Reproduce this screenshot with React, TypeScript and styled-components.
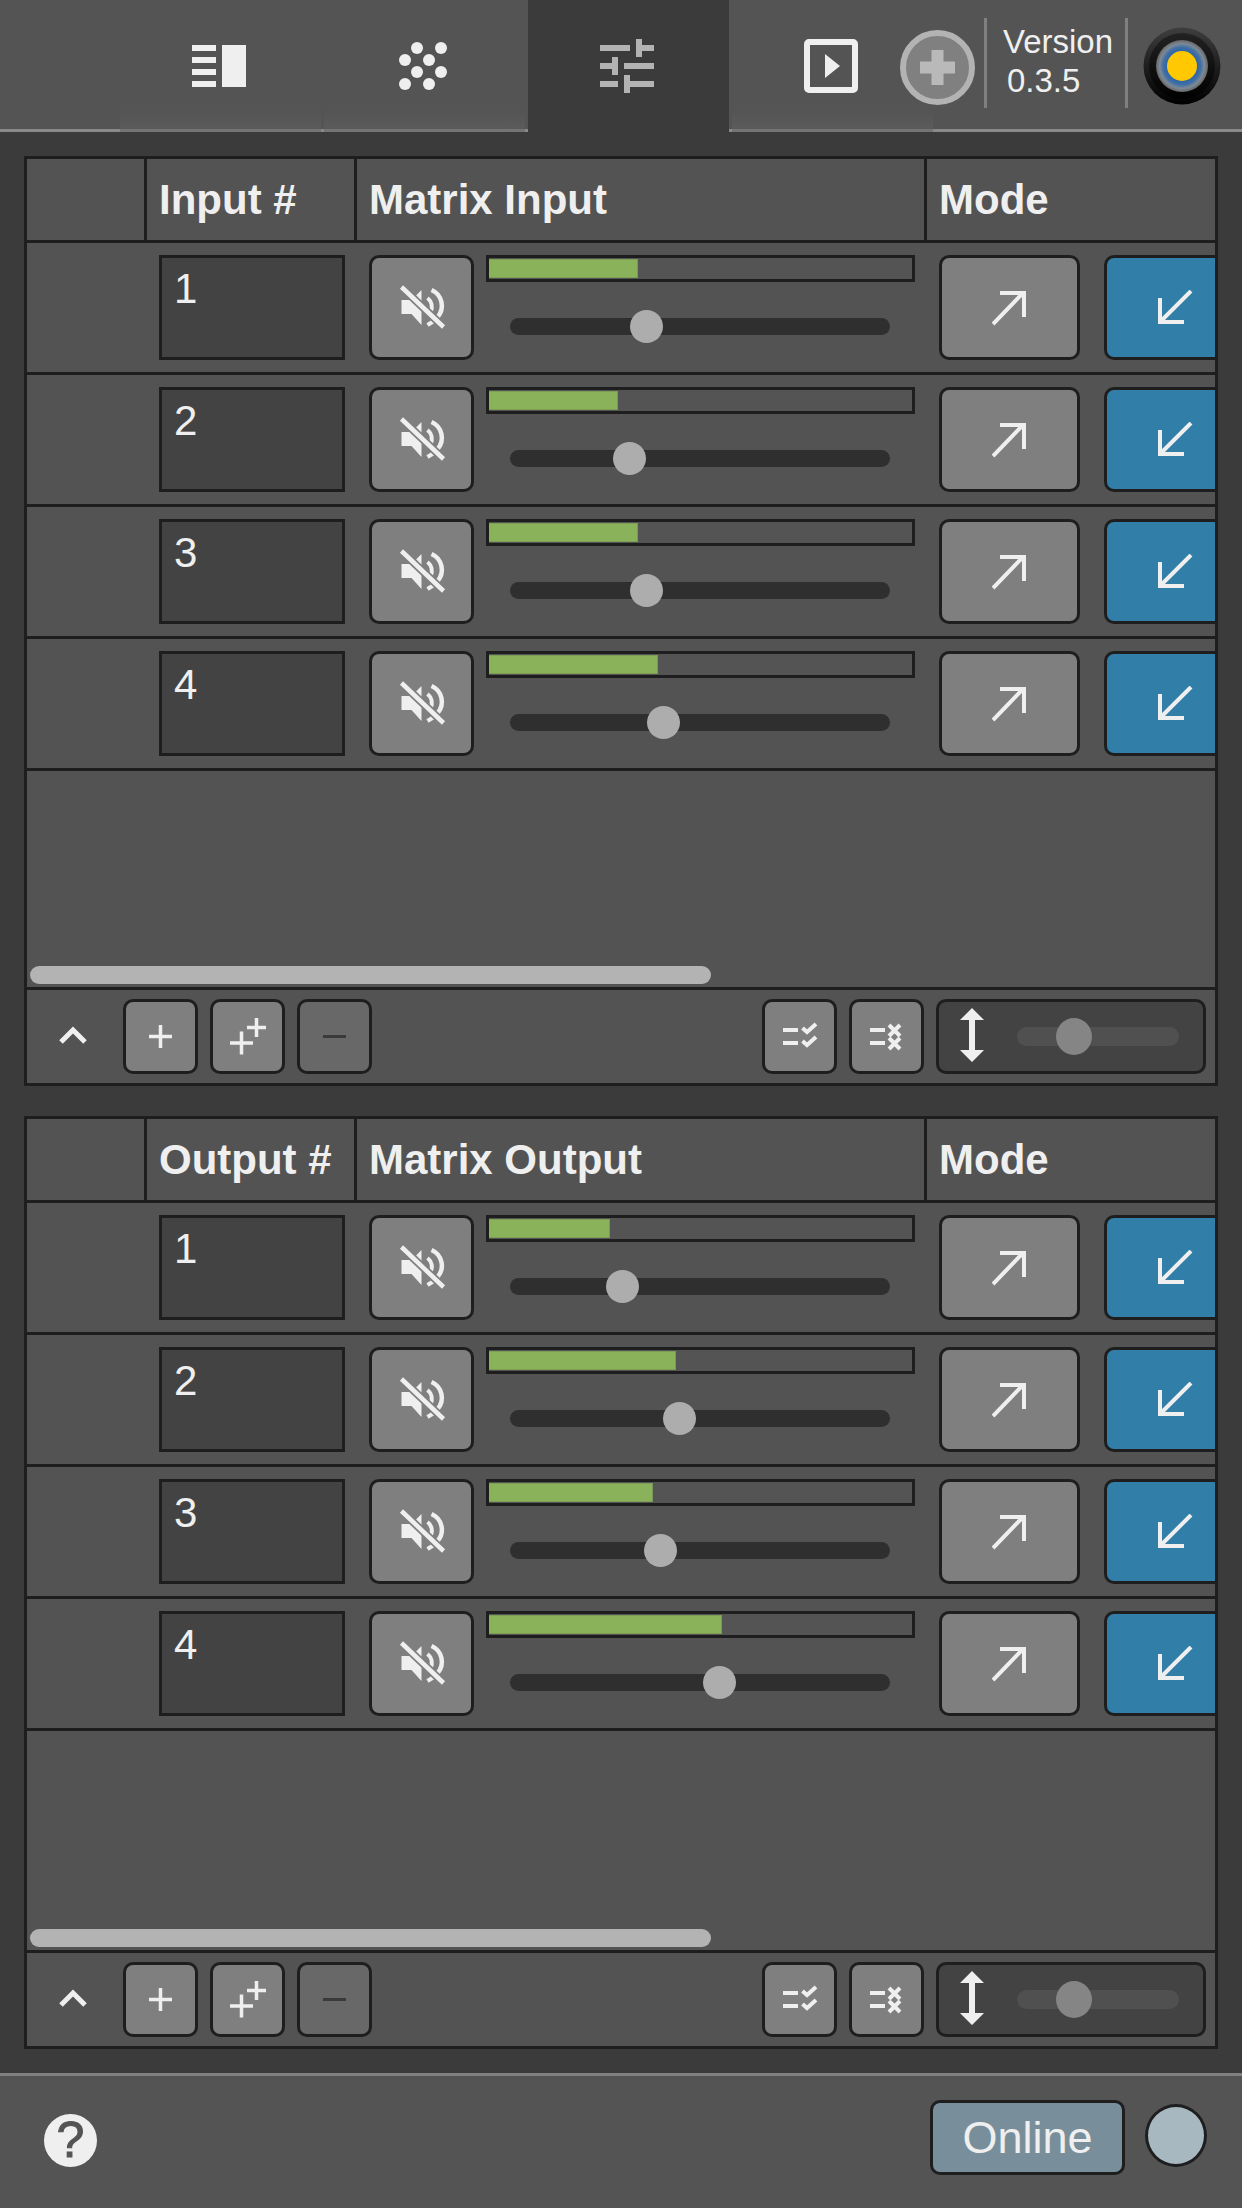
import React from 'react';
import styled, { createGlobalStyle } from 'styled-components';

const INK = '#1e1e1e';
const LIGHT = '#efefef';

const GlobalStyle = createGlobalStyle`
    html, body {
        margin: 0;
        padding: 0;
        background: #3b3b3b;
    }
    * {
        box-sizing: border-box;
    }
`;

const Page = styled.div`
    width: 1242px;
    height: 2208px;
    display: flex;
    flex-direction: column;
    overflow: hidden;
    background: #3b3b3b;
    color: ${LIGHT};
    font-family: 'Liberation Sans', Arial, sans-serif;
`;

const TopBar = styled.header`
    height: 132px;
    flex: none;
    display: flex;
    background: #545454;
    border-bottom: 3px solid #8a8a8a;
`;

const TabStrip = styled.nav`
    flex: none;
    width: 933px;
    padding-left: 120px;
    display: flex;
    gap: 3px;
`;

const Tab = styled.div<{ $active?: boolean }>`
    flex: none;
    width: 201px;
    height: 132px;
    padding: 3px 3px 0 0;
    display: flex;
    align-items: center;
    justify-content: center;
    background: ${(p) => (p.$active ? '#3b3b3b' : 'linear-gradient(#545454 85%, #5b5b5b)')};
    border-bottom: 3px solid ${(p) => (p.$active ? '#3b3b3b' : '#747474')};
`;

const TopTools = styled.div`
    margin-left: -33px;
    display: flex;
    align-items: flex-start;
`;

const AddDevice = styled.svg`
    flex: none;
    margin: 30px 9px 0 0;
`;

const ToolDivider = styled.div`
    flex: none;
    width: 3px;
    height: 90px;
    margin-top: 18px;
    background: #808080;
`;

const VersionBlock = styled.div`
    flex: none;
    width: 138px;
    padding: 22px 0 0 16px;
    font-size: 33px;
    line-height: 39px;
`;

const VersionNumber = styled.div`
    padding-left: 4px;
`;

const Logo = styled.svg`
    flex: none;
    margin: 26px 0 0 14px;
`;

const Main = styled.main`
    flex: 1;
    padding: 24px 24px 0;
    display: flex;
    flex-direction: column;
    gap: 30px;
`;

const Panel = styled.section<{ $height: number }>`
    flex: none;
    height: ${(p) => p.$height}px;
    display: flex;
    flex-direction: column;
    overflow: hidden;
    background: #535353;
    border: 3px solid ${INK};
`;

const ColumnGrid = styled.div`
    display: grid;
    grid-template-columns: 120px 210px 570px 1fr;
    flex: none;
    border-bottom: 3px solid ${INK};
`;

const HeaderRow = styled(ColumnGrid)`
    height: 84px;
`;

const HeaderCell = styled.div`
    padding-left: 12px;
    display: flex;
    align-items: center;
    font-size: 42px;
    font-weight: 700;
    white-space: nowrap;
    border-right: 3px solid ${INK};

    &:last-child {
        border-right: none;
    }
`;

const Row = styled(ColumnGrid)`
    height: 132px;
`;

const RowCell = styled.div`
    padding: 12px;
    display: flex;
    min-width: 0;
`;

const ChannelNumber = styled.div`
    width: 186px;
    height: 105px;
    padding: 11px 0 0 12px;
    font-size: 42px;
    line-height: 40px;
    background: #434343;
    border: 3px solid ${INK};
`;

const SquareButton = styled.div<{ $tone?: 'plain' | 'blue' | 'dim' }>`
    flex: none;
    display: flex;
    align-items: center;
    justify-content: center;
    border: 3px solid ${INK};
    border-radius: 10px;
    background: ${(p) => (p.$tone === 'blue' ? '#317fa8' : p.$tone === 'dim' ? '#686868' : '#7f7f7f')};
`;

const MuteButton = styled(SquareButton)`
    width: 105px;
    height: 105px;
`;

const ModeButton = styled(SquareButton)`
    width: 141px;
    height: 105px;
`;

const ModeGroup = styled(RowCell)`
    gap: 24px;
`;

const LevelColumn = styled.div`
    flex: none;
    width: 429px;
    margin-left: 12px;
    display: flex;
    flex-direction: column;
`;

const Meter = styled.div`
    height: 27px;
    padding: 1px 0;
    background: #545454;
    border: 3px solid ${INK};
`;

const MeterFill = styled.div`
    height: 100%;
    background: #8ab25a;
    box-shadow: inset -1px 0 0 #76985a, inset 0 1px 0 #7c9f55, inset 0 -1px 0 #7c9f55;
`;

const GainTrack = styled.div`
    position: relative;
    height: 17px;
    margin: 36px 25px 0 24px;
    border-radius: 9px;
    background: #2f2f2f;
`;

const GainThumb = styled.div`
    position: absolute;
    top: -8px;
    width: 33px;
    height: 33px;
    margin-left: -16.5px;
    border-radius: 50%;
    background: #adadad;
`;

const ScrollFill = styled.div`
    flex: 1;
    display: flex;
    align-items: flex-end;
    padding: 0 0 3px 3px;
`;

const ScrollThumb = styled.div`
    width: 681px;
    height: 18px;
    border-radius: 9px;
    background: #b3b3b3;
`;

const Toolbar = styled.div`
    flex: none;
    height: 96px;
    padding: 9px;
    display: flex;
    align-items: flex-start;
    gap: 12px;
    border-top: 3px solid ${INK};
`;

const Collapse = styled.svg`
    flex: none;
    width: 75px;
`;

const ToolButton = styled(SquareButton)`
    width: 75px;
    height: 75px;
`;

const RowHeightControl = styled.div`
    flex: none;
    width: 270px;
    height: 75px;
    padding: 6px 24px 6px 21px;
    display: flex;
    align-items: center;
    gap: 33px;
    background: #434343;
    border: 3px solid ${INK};
    border-radius: 10px;
`;

const HeightTrack = styled.div`
    position: relative;
    flex: 1;
    height: 19px;
    border-radius: 10px;
    background: #505050;
`;

const HeightThumb = styled.div`
    position: absolute;
    top: -9px;
    left: 39px;
    width: 36px;
    height: 37px;
    border-radius: 50%;
    background: #858585;
`;

const ResizeGlyph = styled.svg`
    flex: none;
    margin-top: -3px;
`;

const ToolbarEnd = styled.div`
    margin-left: auto;
    display: flex;
    gap: 12px;
`;

const Footer = styled.footer`
    height: 135px;
    margin-top: auto;
    flex: none;
    display: flex;
    align-items: flex-start;
    background: #545454;
    border-top: 3px solid #808080;
`;

const HelpBadge = styled.div`
    width: 53px;
    height: 53px;
    margin: 38px 0 0 44px;
    display: flex;
    align-items: center;
    justify-content: center;
    border-radius: 50%;
    background: ${LIGHT};
    color: #545454;
    font-size: 50px;
    line-height: 53px;
    -webkit-text-stroke: 1px #545454;
`;

const OnlineButton = styled.div`
    width: 195px;
    height: 75px;
    margin: 24px 0 0 auto;
    display: flex;
    align-items: center;
    justify-content: center;
    font-size: 45px;
    background: #788f9b;
    border: 3px solid ${INK};
    border-radius: 10px;
`;

const StatusLight = styled.div`
    width: 62px;
    height: 63px;
    margin: 28px 35px 0 20px;
    border-radius: 50%;
    background: #a8b8c0;
    border: 3px solid ${INK};
`;

const ListIcon = () => (
    <svg width="54" height="42" viewBox="0 0 54 42" fill={LIGHT}>
        <rect x="0" y="0" width="24" height="6" />
        <rect x="0" y="12" width="24" height="6" />
        <rect x="0" y="24" width="24" height="6" />
        <rect x="0" y="36" width="24" height="6" />
        <rect x="30" y="0" width="24" height="42" />
    </svg>
);

const DotsIcon = () => (
    <svg width="50" height="48" viewBox="0 0 50 48" fill={LIGHT}>
        {[
            [19, 6],
            [43, 6],
            [7, 18],
            [31, 18],
            [19, 30],
            [43, 30],
            [7, 42],
            [31, 42],
        ].map(([cx, cy]) => (
            <circle key={`${cx}-${cy}`} cx={cx} cy={cy} r="6" />
        ))}
    </svg>
);

const SlidersIcon = () => (
    <svg width="54" height="54" viewBox="0 0 54 54" fill="#b3b3b3">
        <path d="M0 6h30v6H0zM36 0h6v6h12v6H42v6h-6zM0 24h12v-6h6v18h-6v-6H0zM24 24h30v6H24zM0 42h18v6H0zM24 36h6v6h24v6H30v6h-6z" />
    </svg>
);

const PlayIcon = () => (
    <svg width="54" height="54" viewBox="0 0 54 54">
        <rect x="3" y="3" width="48" height="48" rx="2" fill="none" stroke={LIGHT} strokeWidth="6" />
        <path d="M21 15l15 12-15 12z" fill={LIGHT} />
    </svg>
);

const AddIcon = () => (
    <AddDevice width="75" height="75" viewBox="0 0 75 75">
        <circle cx="37.5" cy="37.5" r="34.5" fill="#808080" stroke="#b3b3b3" strokeWidth="6" />
        <path d="M31.5 20h12v11.500h11.500v12H43.500V55h-12V43.500H20v-12h11.500z" fill="#b9b9b9" />
    </AddDevice>
);

const BrandLogo = () => (
    <Logo width="80" height="80" viewBox="0 0 80 80">
        <defs>
            <linearGradient id="logoOuter" x1="0" y1="0" x2="0" y2="1">
                <stop offset="0" stopColor="#3e3e3e" />
                <stop offset="1" stopColor="#000" />
            </linearGradient>
            <linearGradient id="logoInner" x1="0" y1="0" x2="0" y2="1">
                <stop offset="0" stopColor="#222" />
                <stop offset="1" stopColor="#000" />
            </linearGradient>
            <radialGradient id="logoRing">
                <stop offset="0.58" stopColor="#2f66a6" />
                <stop offset="0.72" stopColor="#3f6fa6" />
                <stop offset="0.86" stopColor="#7d8995" />
                <stop offset="1" stopColor="#666" />
            </radialGradient>
        </defs>
        <circle cx="40" cy="40" r="38.500" fill="url(#logoOuter)" />
        <circle cx="40" cy="40" r="33" fill="url(#logoInner)" />
        <circle cx="40" cy="40" r="26" fill="url(#logoRing)" />
        <circle cx="40" cy="40" r="15" fill="#ffc800" />
    </Logo>
);

const MuteIcon = () => (
    <svg width="60" height="55" viewBox="1.5 0 60 55">
        <path d="M11 20h10L31 10v35L21 34H11z" fill={LIGHT} />
        <path d="M37 18A11 11 0 0 1 40 32" fill="none" stroke={LIGHT} strokeWidth="4" />
        <path d="M41 10A17 17 0 0 1 47 37" fill="none" stroke={LIGHT} strokeWidth="4.500" />
        <path d="M37 45l8-5" fill="none" stroke={LIGHT} strokeWidth="4" />
        <path d="M11 7l42 40" stroke="#7f7f7f" strokeWidth="8" />
        <path d="M11 7l42 40" stroke={LIGHT} strokeWidth="4.500" />
    </svg>
);

const ArrowOutIcon = () => (
    <svg width="36" height="36" viewBox="0 0 36 36" fill="none" stroke={LIGHT} strokeWidth="4">
        <path d="M1 34L31 3M8 3h24v24" />
    </svg>
);

const ArrowInIcon = () => (
    <svg width="36" height="36" viewBox="0 0 36 36" fill="none" stroke={LIGHT} strokeWidth="4">
        <path d="M34 1L3 32M3 8v24h24" />
    </svg>
);

const PlusIcon = () => (
    <svg width="69" height="69" viewBox="0 0 69 69" stroke={LIGHT} strokeWidth="3.500">
        <path d="M23 34.500h23M34.500 23v23" />
    </svg>
);

const DoublePlusIcon = () => (
    <svg width="69" height="69" viewBox="0 0 69 69" stroke={LIGHT} strokeWidth="3.500">
        <path d="M17 41h23M28.500 29.500v23" />
        <path d="M34 25.500h19M43.500 16v19" />
    </svg>
);

const MinusIcon = () => (
    <svg width="69" height="69" viewBox="0 0 69 69" stroke="#3a3a3a" strokeWidth="3">
        <path d="M23 34.500h23" />
    </svg>
);

const CheckListIcon = () => (
    <svg width="69" height="69" viewBox="0 0 69 69" fill="none" stroke={LIGHT} strokeWidth="4">
        <path d="M18 28h15M18 41h15" />
        <path d="M37.500 26l4.500 4 9-8M37.500 39l4.500 4 9-8" />
    </svg>
);

const CrossListIcon = () => (
    <svg width="69" height="69" viewBox="0 0 69 69" fill="none" stroke={LIGHT} strokeWidth="4">
        <path d="M18 28h15M18 41h15" />
        <path d="M37 23l11 11M48 23L37 34M37 36l11 11M48 36L37 47" />
    </svg>
);

const ResizeIcon = () => (
    <ResizeGlyph width="24" height="54" viewBox="0 0 24 54" fill={LIGHT}>
        <path d="M12 0l12 12h-9v30h9L12 54 0 42h9V12H0z" />
    </ResizeGlyph>
);

interface Channel {
    id: number;
    fill: number;
    thumb: number;
}

interface MatrixPanelProps {
    numberLabel: string;
    matrixLabel: string;
    channels: Array<Channel>;
    height: number;
}

const MatrixPanel = ({ numberLabel, matrixLabel, channels, height }: MatrixPanelProps) => (
    <Panel $height={height}>
        <HeaderRow>
            <HeaderCell />
            <HeaderCell>{numberLabel}</HeaderCell>
            <HeaderCell>{matrixLabel}</HeaderCell>
            <HeaderCell>Mode</HeaderCell>
        </HeaderRow>
        {channels.map((channel) => (
            <Row key={channel.id}>
                <RowCell />
                <RowCell>
                    <ChannelNumber>{channel.id}</ChannelNumber>
                </RowCell>
                <RowCell>
                    <MuteButton>
                        <MuteIcon />
                    </MuteButton>
                    <LevelColumn>
                        <Meter>
                            <MeterFill style={{ width: channel.fill }} />
                        </Meter>
                        <GainTrack>
                            <GainThumb style={{ left: channel.thumb }} />
                        </GainTrack>
                    </LevelColumn>
                </RowCell>
                <ModeGroup>
                    <ModeButton>
                        <ArrowOutIcon />
                    </ModeButton>
                    <ModeButton $tone="blue">
                        <ArrowInIcon />
                    </ModeButton>
                </ModeGroup>
            </Row>
        ))}
        <ScrollFill>
            <ScrollThumb />
        </ScrollFill>
        <Toolbar>
            <Collapse height="75" viewBox="0 0 75 75" fill="none" stroke={LIGHT} strokeWidth="5">
                <path d="M25 43l12-12 12 12" />
            </Collapse>
            <ToolButton>
                <PlusIcon />
            </ToolButton>
            <ToolButton>
                <DoublePlusIcon />
            </ToolButton>
            <ToolButton $tone="dim">
                <MinusIcon />
            </ToolButton>
            <ToolbarEnd>
                <ToolButton>
                    <CheckListIcon />
                </ToolButton>
                <ToolButton>
                    <CrossListIcon />
                </ToolButton>
                <RowHeightControl>
                    <ResizeIcon />
                    <HeightTrack>
                        <HeightThumb />
                    </HeightTrack>
                </RowHeightControl>
            </ToolbarEnd>
        </Toolbar>
    </Panel>
);

const inputs: Array<Channel> = [
    { id: 1, fill: 149, thumb: 136 },
    { id: 2, fill: 129, thumb: 119 },
    { id: 3, fill: 149, thumb: 136 },
    { id: 4, fill: 169, thumb: 153 },
];

const outputs: Array<Channel> = [
    { id: 1, fill: 121, thumb: 112 },
    { id: 2, fill: 187, thumb: 169 },
    { id: 3, fill: 164, thumb: 150 },
    { id: 4, fill: 233, thumb: 209 },
];

export default function App() {
    return (
        <Page>
            <GlobalStyle />
            <TopBar>
                <TabStrip>
                    <Tab>
                        <ListIcon />
                    </Tab>
                    <Tab>
                        <DotsIcon />
                    </Tab>
                    <Tab $active>
                        <SlidersIcon />
                    </Tab>
                    <Tab>
                        <PlayIcon />
                    </Tab>
                </TabStrip>
                <TopTools>
                    <AddIcon />
                    <ToolDivider />
                    <VersionBlock>
                        Version
                        <VersionNumber>0.3.5</VersionNumber>
                    </VersionBlock>
                    <ToolDivider />
                    <BrandLogo />
                </TopTools>
            </TopBar>
            <Main>
                <MatrixPanel numberLabel="Input #" matrixLabel="Matrix Input" channels={inputs} height={930} />
                <MatrixPanel numberLabel="Output #" matrixLabel="Matrix Output" channels={outputs} height={933} />
            </Main>
            <Footer>
                <HelpBadge>?</HelpBadge>
                <OnlineButton>Online</OnlineButton>
                <StatusLight />
            </Footer>
        </Page>
    );
}
